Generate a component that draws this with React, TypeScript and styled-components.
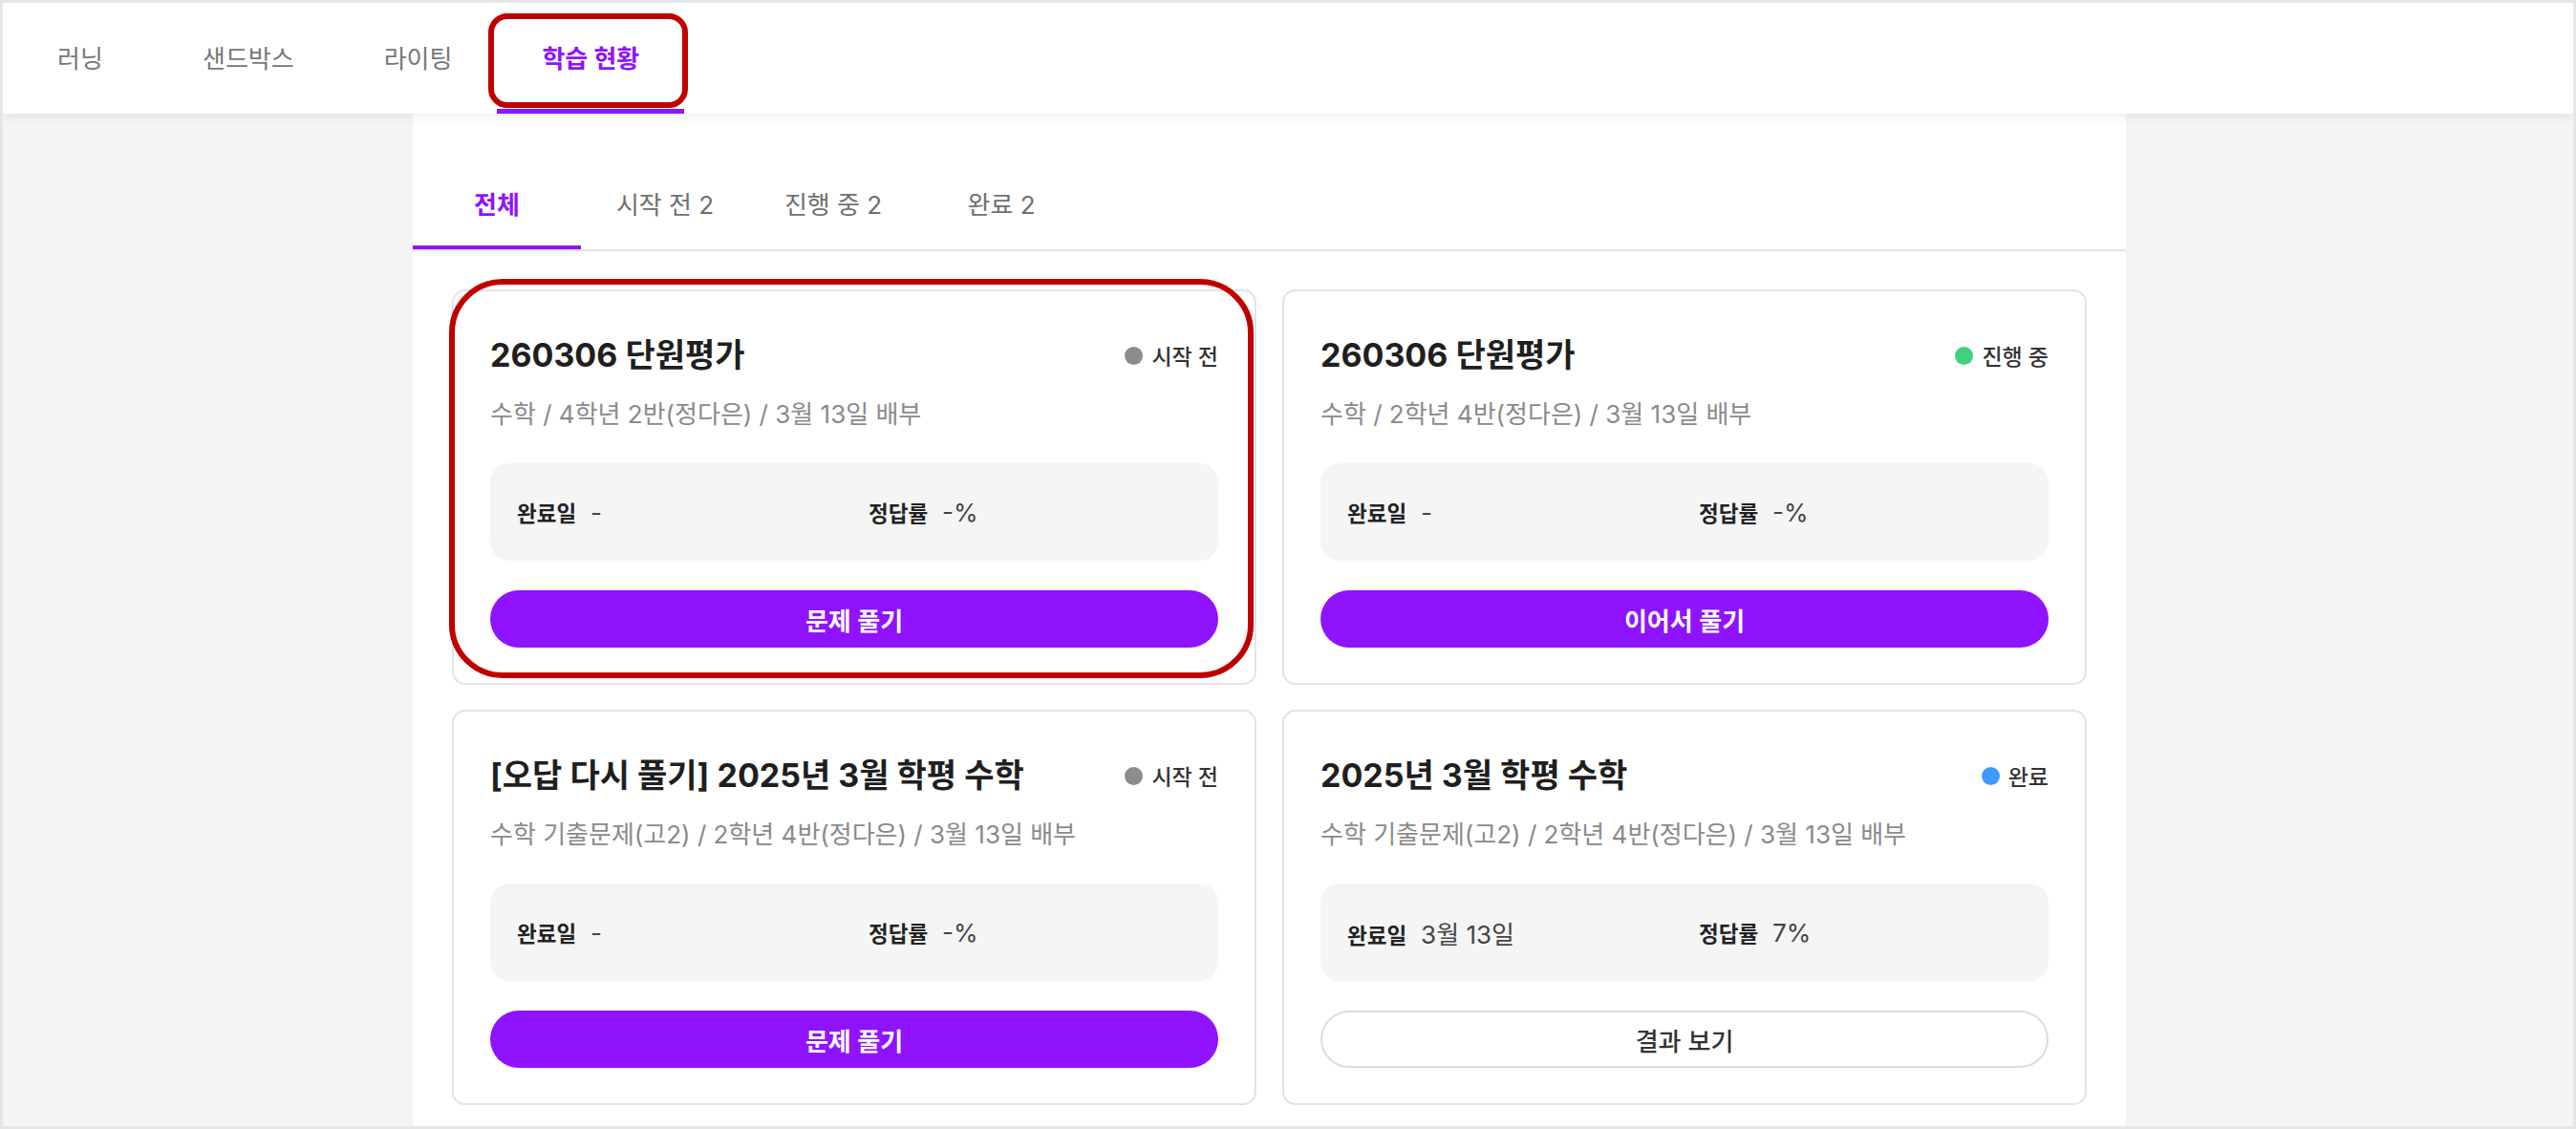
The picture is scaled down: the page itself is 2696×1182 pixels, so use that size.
import styled, { createGlobalStyle } from "styled-components";

const PURPLE = "#8f13fd";

const GlobalStyle = createGlobalStyle`
  * {
    box-sizing: border-box;
  }
  html,
  body {
    margin: 0;
    padding: 0;
  }
  body {
    width: 2696px;
    height: 1182px;
    overflow: hidden;
    font-family: "Inter", "Noto Sans CJK KR", sans-serif;
    color: #222;
  }
`;

const Frame = styled.div`
  width: 2696px;
  height: 1182px;
  border: 3px solid #e6e6e6;
  background: #f4f4f4;
  display: flex;
  flex-direction: column;
  overflow: hidden;
`;

const TopNav = styled.nav`
  position: relative;
  z-index: 1;
  flex-shrink: 0;
  height: 116px;
  display: flex;
  background: #fff;
  box-shadow: 0 3px 10px rgba(0, 0, 0, 0.07);
`;

const NavTab = styled.div<{ $active?: boolean }>`
  position: relative;
  min-width: 162px;
  padding: 0 47px 4px;
  display: flex;
  align-items: center;
  justify-content: center;
  font-size: 26px;
  font-weight: ${(p) => (p.$active ? 700 : 400)};
  color: ${(p) => (p.$active ? PURPLE : "#777")};
  box-shadow: ${(p) => (p.$active ? `inset 0 -5px 0 ${PURPLE}` : "none")};
  white-space: nowrap;
`;

// red annotation ring drawn over the screenshot
const Highlight = styled.span<{ $inset: string; $radius: number }>`
  position: absolute;
  inset: ${(p) => p.$inset};
  border: 6px solid #c00000;
  border-radius: ${(p) => p.$radius}px;
  pointer-events: none;
`;

const Main = styled.main`
  flex: 1;
  display: flex;
  min-height: 0;
`;

const Panel = styled.section`
  width: 1793px;
  margin-left: 429px;
  background: #fff;
  padding-top: 44px;
`;

const TabBar = styled.div`
  display: flex;
  border-bottom: 2px solid #e2e2e2;
`;

const SubTab = styled.div<{ $active?: boolean }>`
  width: 176px;
  height: 98px;
  display: flex;
  align-items: center;
  justify-content: center;
  font-size: 26px;
  font-weight: ${(p) => (p.$active ? 700 : 400)};
  color: ${(p) => (p.$active ? PURPLE : "#6f6f6f")};
  box-shadow: ${(p) => (p.$active ? `inset 0 -4px 0 ${PURPLE}` : "none")};
`;

const CardGrid = styled.div`
  display: grid;
  grid-template-columns: 1fr 1fr;
  gap: 26px 27px;
  padding: 40px 41px 0;
`;

const Card = styled.article`
  position: relative;
  background: #fff;
  border: 2px solid #e3e3e3;
  border-radius: 14px;
  padding: 43px 38px 37px;
`;

const CardHeader = styled.div`
  height: 48px;
  display: flex;
  align-items: center;
  justify-content: space-between;
`;

const Title = styled.h3`
  margin: 0;
  font-size: 34px;
  line-height: 48px;
  font-weight: 700;
  color: #1f1f1f;
`;

const Status = styled.div`
  display: flex;
  align-items: center;
  gap: 9px;
  font-size: 23px;
  font-weight: 500;
  color: #333;
`;

const Dot = styled.span<{ $color: string }>`
  width: 19px;
  height: 19px;
  border-radius: 50%;
  background: ${(p) => p.$color};
`;

const Meta = styled.p`
  margin: 22px 0 0;
  font-size: 26px;
  line-height: 32px;
  color: #8a8a8a;
`;

const InfoBox = styled.div`
  margin-top: 35px;
  height: 102px;
  padding: 0 28px;
  display: grid;
  grid-template-columns: 1fr 1fr;
  column-gap: 30px;
  align-items: center;
  background: #f5f5f5;
  border-radius: 20px;
`;

const InfoItem = styled.div`
  display: flex;
  align-items: baseline;
  gap: 15px;
`;

const Label = styled.span`
  font-size: 22.5px;
  font-weight: 700;
  color: #222;
`;

const Value = styled.span`
  font-size: 26px;
  color: #444;
`;

const ActionButton = styled.button<{ $outline?: boolean }>`
  display: block;
  width: 100%;
  height: 60px;
  margin-top: 31px;
  border-radius: 30px;
  border: ${(p) => (p.$outline ? "2px solid #dcdcdc" : "none")};
  background: ${(p) => (p.$outline ? "#fff" : PURPLE)};
  color: ${(p) => (p.$outline ? "#333" : "#fff")};
  font-family: inherit;
  font-size: 26px;
  font-weight: ${(p) => (p.$outline ? 500 : 600)};
  cursor: pointer;
`;

type StatusKind = "ready" | "progress" | "done";

const STATUS: Record<StatusKind, { label: string; color: string }> = {
  ready: { label: "시작 전", color: "#8c8c8c" },
  progress: { label: "진행 중", color: "#3ed27a" },
  done: { label: "완료", color: "#3d9bff" },
};

type Assignment = {
  title: string;
  meta: string;
  status: StatusKind;
  completedAt: string;
  score: string;
  action: string;
  highlighted?: boolean;
};

const assignments: Assignment[] = [
  {
    title: "260306 단원평가",
    meta: "수학 / 4학년 2반(정다은) / 3월 13일 배부",
    status: "ready",
    completedAt: "-",
    score: "-%",
    action: "문제 풀기",
    highlighted: true,
  },
  {
    title: "260306 단원평가",
    meta: "수학 / 2학년 4반(정다은) / 3월 13일 배부",
    status: "progress",
    completedAt: "-",
    score: "-%",
    action: "이어서 풀기",
  },
  {
    title: "[오답 다시 풀기] 2025년 3월 학평 수학",
    meta: "수학 기출문제(고2) / 2학년 4반(정다은) / 3월 13일 배부",
    status: "ready",
    completedAt: "-",
    score: "-%",
    action: "문제 풀기",
  },
  {
    title: "2025년 3월 학평 수학",
    meta: "수학 기출문제(고2) / 2학년 4반(정다은) / 3월 13일 배부",
    status: "done",
    completedAt: "3월 13일",
    score: "7%",
    action: "결과 보기",
  },
];

const navItems = ["러닝", "샌드박스", "라이팅", "학습 현황"];
const filterTabs = ["전체", "시작 전 2", "진행 중 2", "완료 2"];

function AssignmentCard({ item }: { item: Assignment }) {
  const status = STATUS[item.status];
  return (
    <Card>
      <CardHeader>
        <Title>{item.title}</Title>
        <Status>
          <Dot $color={status.color} />
          {status.label}
        </Status>
      </CardHeader>
      <Meta>{item.meta}</Meta>
      <InfoBox>
        <InfoItem>
          <Label>완료일</Label>
          <Value>{item.completedAt}</Value>
        </InfoItem>
        <InfoItem>
          <Label>정답률</Label>
          <Value>{item.score}</Value>
        </InfoItem>
      </InfoBox>
      <ActionButton $outline={item.status === "done"}>{item.action}</ActionButton>
      {item.highlighted && <Highlight $inset="-13px 1px 5px -5px" $radius={56} />}
    </Card>
  );
}

export default function App() {
  return (
    <>
      <GlobalStyle />
      <Frame>
        <TopNav>
          {navItems.map((name, i) => {
            const active = i === navItems.length - 1;
            return (
              <NavTab key={name} $active={active}>
                {name}
                {active && <Highlight $inset="11px -4px 6px -9px" $radius={20} />}
              </NavTab>
            );
          })}
        </TopNav>
        <Main>
          <Panel>
            <TabBar>
              {filterTabs.map((tab, i) => (
                <SubTab key={tab} $active={i === 0}>
                  {tab}
                </SubTab>
              ))}
            </TabBar>
            <CardGrid>
              {assignments.map((a, i) => (
                <AssignmentCard key={i} item={a} />
              ))}
            </CardGrid>
          </Panel>
        </Main>
      </Frame>
    </>
  );
}
